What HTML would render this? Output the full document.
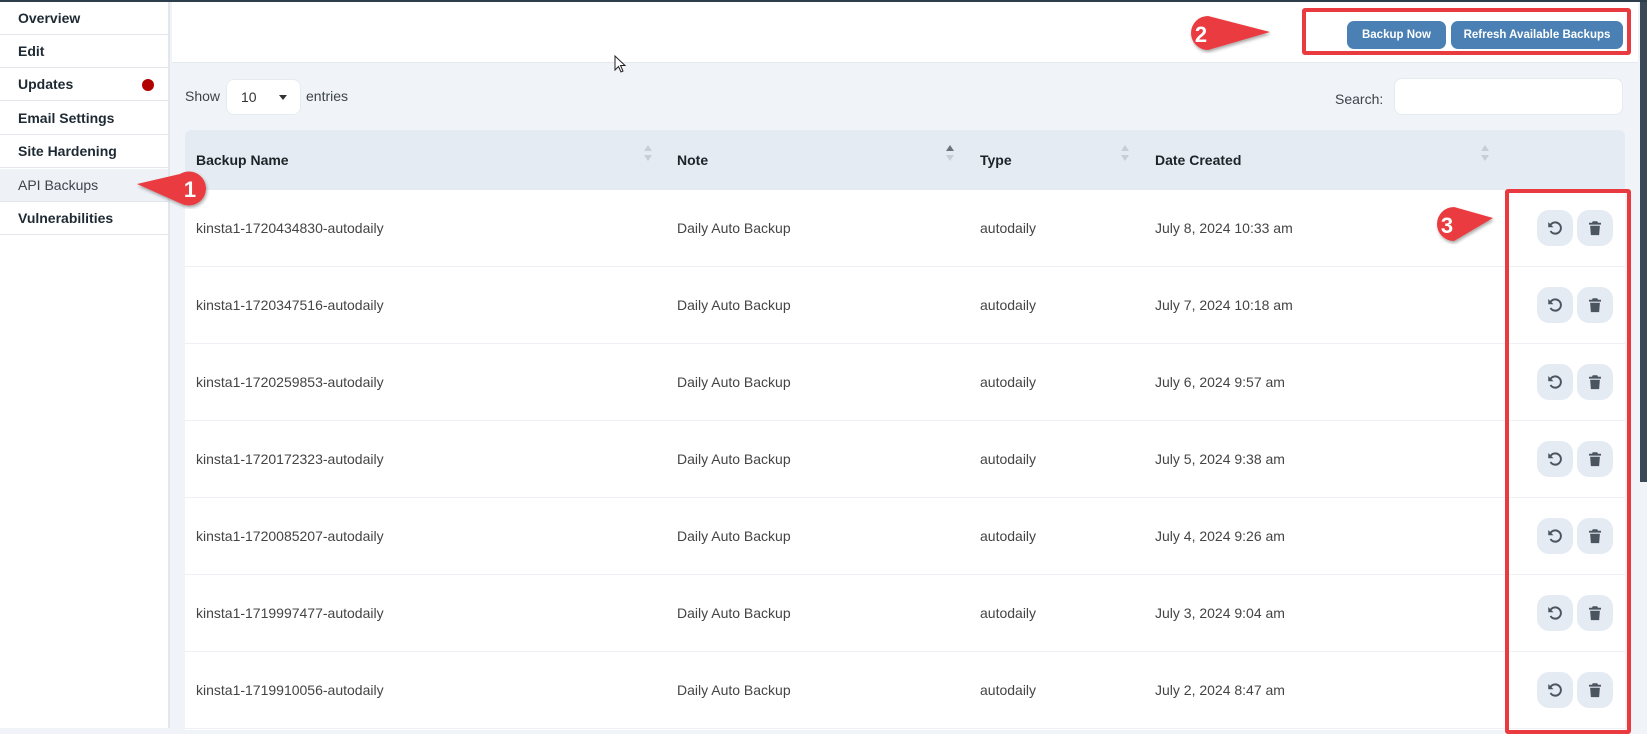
<!DOCTYPE html>
<html><head><meta charset="utf-8"><style>
*{box-sizing:border-box;margin:0;padding:0}
body{width:1647px;height:728px;overflow:hidden;position:relative;background:#f0f4f8;font-family:"Liberation Sans",sans-serif;font-size:14px;color:#3c434a}
.abs{position:absolute}
#top{left:0;top:0;width:1647px;height:2px;background:#2c3e4c}
#side{left:0;top:2px;width:170px;height:726px;background:#fff;border-right:2px solid #e2e7ed}
.it{position:absolute;left:0;width:168px;height:33px;border-bottom:1px solid #e3e7eb;padding-left:18px;line-height:32px;font-weight:bold;color:#1e2a33;font-size:14px}
#hdr{left:172px;top:2px;width:1466px;height:61px;background:#fff;border-bottom:1px solid #e4e9ef}
.btn{position:absolute;top:19px;height:28px;background:#4a80b3;color:#fff;font-weight:bold;font-size:11.5px;border-radius:7px;text-align:center;line-height:28px}
.rbox{position:absolute;border:4px solid #e93a3f;border-radius:3px}
#tbl{left:185px;top:130px;width:1440px;height:600px;background:#fff;border-radius:6px 6px 0 0;overflow:hidden}
#th{position:absolute;left:0;top:0;width:1440px;height:60px;background:#e5ebf3}
.hc{position:absolute;top:22px;font-weight:bold;color:#1d2327;font-size:14px}
.so{position:absolute;top:14px;width:8px}
.row{position:absolute;left:0;width:1440px;height:77px;border-bottom:1px solid #edf1f5}
.c{position:absolute;top:30px;color:#444;font-size:14px}
.ab{position:absolute;top:20px;width:36px;height:36px;border-radius:12px;background:#e5ebf3}
.ab svg{position:absolute;left:9px;top:9px}
</style></head><body>
<div id="top" class="abs"></div>
<div id="side" class="abs">
 <div class="it" style="top:0">Overview</div>
 <div class="it" style="top:33px">Edit</div>
 <div class="it" style="top:66px">Updates<span style="position:absolute;left:142px;top:11px;width:12px;height:12px;border-radius:50%;background:#b00000"></span></div>
 <div class="it" style="top:100px">Email Settings</div>
 <div class="it" style="top:133px">Site Hardening</div>
 <div class="it" style="top:167px;background:#eef2f7;font-weight:normal;color:#3c434a">API Backups</div>
 <div class="it" style="top:200px">Vulnerabilities</div>
</div>
<div id="hdr" class="abs">
 <div class="btn" style="left:1175px;width:99px">Backup Now</div>
 <div class="btn" style="left:1279px;width:172px">Refresh Available Backups</div>
 <div class="rbox" style="left:1130px;top:6px;width:329px;height:47px"></div>
</div>
<div class="abs" style="left:1640px;top:2px;width:7px;height:480px;background:#3a4955"></div>
<div class="abs" style="left:185px;top:88px">Show</div>
<div class="abs" style="left:226px;top:79px;width:75px;height:36px;background:#fff;border-radius:8px;border:1px solid #e6ebf0"><span style="position:absolute;left:14px;top:9px;color:#333">10</span><span style="position:absolute;left:52px;top:15px;border:4px solid transparent;border-top:5px solid #333"></span></div>
<div class="abs" style="left:306px;top:88px">entries</div>
<div class="abs" style="left:1335px;top:91px">Search:</div>
<div class="abs" style="left:1394px;top:78px;width:229px;height:37px;background:#fff;border-radius:8px;border:1px solid #e6ebf0"></div>
<div id="tbl" class="abs">
 <div id="th">
  <div class="hc" style="left:11px">Backup Name</div>
  <div class="hc" style="left:492px">Note</div>
  <div class="hc" style="left:795px">Type</div>
  <div class="hc" style="left:970px">Date Created</div>
  <svg class="so" style="left:459px" height="18" viewBox="0 0 8 18"><path d="M4 1 8 7H0z" fill="#c9ced4"/><path d="M4 17 8 11H0z" fill="#c9ced4"/></svg>
  <svg class="so" style="left:761px" height="18" viewBox="0 0 8 18"><path d="M4 1 8 7H0z" fill="#6b7279"/><path d="M4 17 8 11H0z" fill="#c9ced4"/></svg>
  <svg class="so" style="left:936px" height="18" viewBox="0 0 8 18"><path d="M4 1 8 7H0z" fill="#c9ced4"/><path d="M4 17 8 11H0z" fill="#c9ced4"/></svg>
  <svg class="so" style="left:1296px" height="18" viewBox="0 0 8 18"><path d="M4 1 8 7H0z" fill="#c9ced4"/><path d="M4 17 8 11H0z" fill="#c9ced4"/></svg>
 </div>
 <div id="rows"></div>
</div>
<div class="rbox" style="left:1505px;top:189px;width:126px;height:545px"></div>
<!-- badges -->
<svg class="abs" style="left:130px;top:168px" width="80" height="42"><defs><filter id="s"><feDropShadow dx="1" dy="2" stdDeviation="1.5" flood-opacity=".35"/></filter></defs><path d="M7 16 L50 6 A17 17 0 1 1 52 36 Z" fill="#e93a3f" filter="url(#s)"/><text x="60" y="29" font-family="Liberation Sans" font-weight="bold" font-size="22" fill="#fff" text-anchor="middle">1</text></svg>
<svg class="abs" style="left:1180px;top:12px" width="100" height="44"><path d="M90 20 L28 38 A17 17 0 1 1 28 4 Z" fill="#e93a3f" filter="url(#s)"/><text x="21" y="30" font-family="Liberation Sans" font-weight="bold" font-size="22" fill="#fff" text-anchor="middle">2</text></svg>
<svg class="abs" style="left:1426px;top:203px" width="75" height="44"><path d="M67 15 L28 38 A17 17 0 1 1 28 4 Z" fill="#e93a3f" filter="url(#s)"/><text x="21" y="30" font-family="Liberation Sans" font-weight="bold" font-size="22" fill="#fff" text-anchor="middle">3</text></svg>
<svg class="abs" style="left:614px;top:55px" width="14" height="20"><path d="M1 1V15L4.5 11.5 7 17 9 16 6.5 10.5H11z" fill="#fff" stroke="#222" stroke-width="1"/></svg>
<script>
var d=[["kinsta1-1720434830-autodaily","July 8, 2024 10:33 am"],["kinsta1-1720347516-autodaily","July 7, 2024 10:18 am"],["kinsta1-1720259853-autodaily","July 6, 2024 9:57 am"],["kinsta1-1720172323-autodaily","July 5, 2024 9:38 am"],["kinsta1-1720085207-autodaily","July 4, 2024 9:26 am"],["kinsta1-1719997477-autodaily","July 3, 2024 9:04 am"],["kinsta1-1719910056-autodaily","July 2, 2024 8:47 am"]];
var h="";
var rs='<svg width="18" height="18" viewBox="0 0 24 24"><path d="M5.5 9A7.5 7.5 0 1 1 6 16" fill="none" stroke="#4a5560" stroke-width="2.6"/><path d="M3 4v7h7z" fill="#4a5560"/></svg>';
var tr='<svg width="18" height="18" viewBox="0 0 24 24"><path d="M9 3h6l1 2h4v2.5H4V5h4zM5.5 9h13l-1 12.5h-11z" fill="#4a5560"/></svg>';
d.forEach(function(r,i){h+='<div class="row" style="top:'+(60+i*77)+'px"><div class="c" style="left:11px">'+r[0]+'</div><div class="c" style="left:492px">Daily Auto Backup</div><div class="c" style="left:795px">autodaily</div><div class="c" style="left:970px">'+r[1]+'</div><div class="ab" style="left:1352px">'+rs+'</div><div class="ab" style="left:1392px">'+tr+'</div></div>';});
document.getElementById("rows").innerHTML=h;
</script>
</body></html>
